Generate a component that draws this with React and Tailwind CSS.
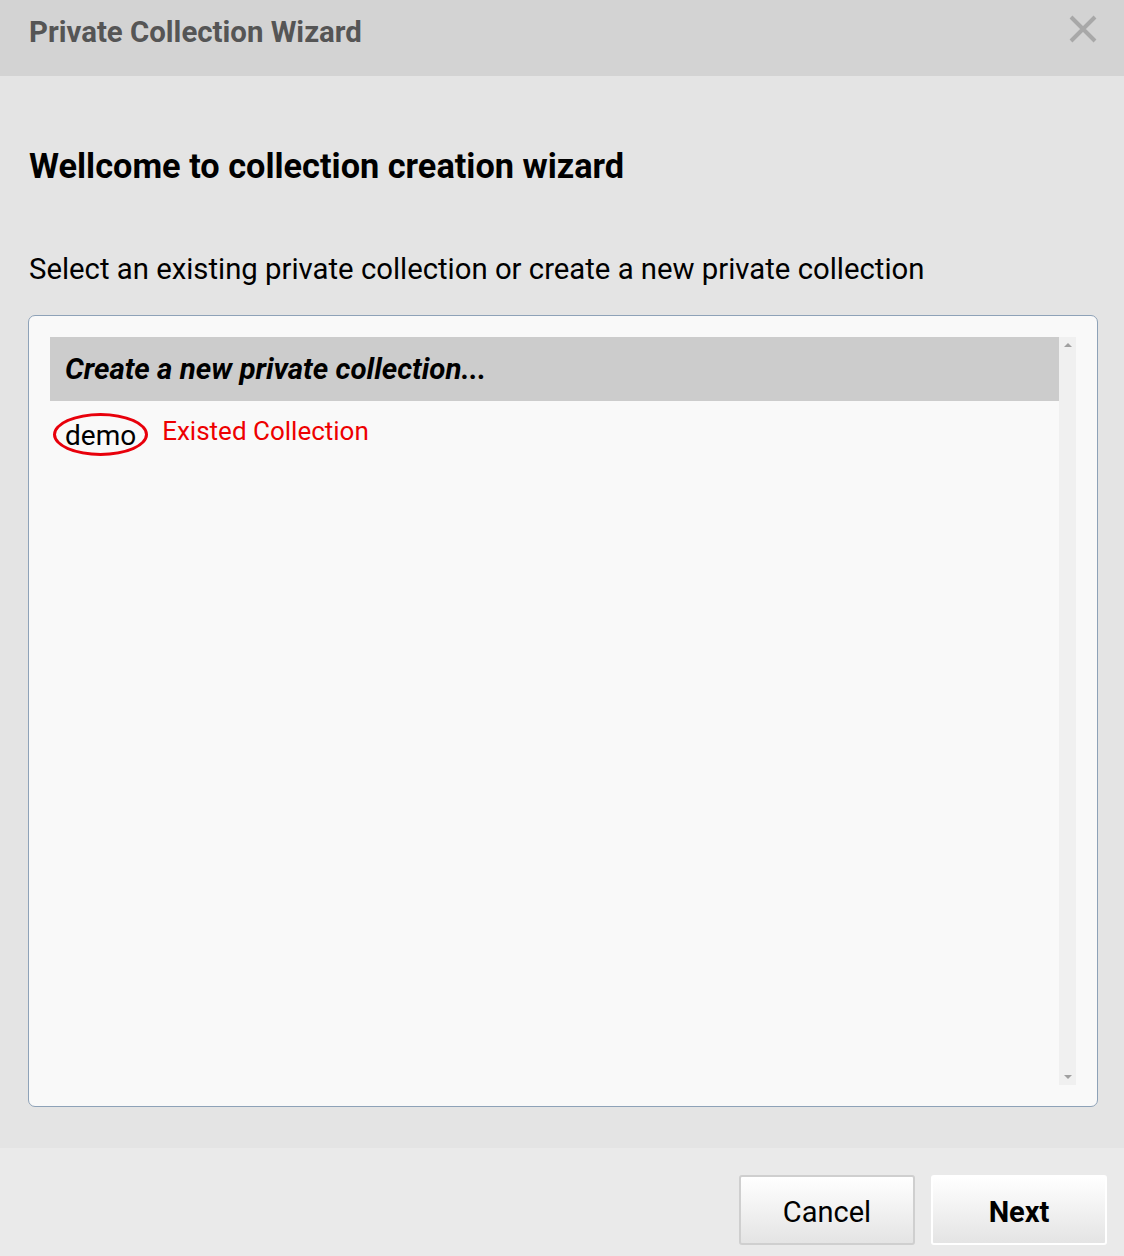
import React from "react";

export default function App() {
  return (
    <div
      className="flex h-[1256px] w-[1124px] flex-col bg-[#e4e4e4] text-black"
      style={{ fontFamily: "Roboto, 'Liberation Sans', sans-serif" }}
    >
      {/* Header */}
      <header className="flex h-[76px] shrink-0 items-center justify-between bg-[#d3d3d3] pl-[29px] pr-[26px]">
        <h1 className="pb-[12px] text-[29.4px] font-bold text-[#555555]">Private Collection Wizard</h1>
        <svg width="30" height="30" viewBox="0 0 30 30" className="mb-[18px]">
          <path d="M3 3 L27 27 M27 3 L3 27" stroke="#a8a8a8" strokeWidth="4" strokeLinecap="butt" />
        </svg>
      </header>

      {/* Body */}
      <section className="flex flex-1 flex-col pl-[28px] pr-[26px]">
        <h2 className="mt-[70px] pl-[1px] text-[34.3px] leading-[40px] font-bold">
          Wellcome to collection creation wizard
        </h2>
        <p className="mt-[65px] pl-[1px] text-[29.3px] leading-[36px]">
          Select an existing private collection or create a new private collection
        </p>

        <div className="mt-[28px] mb-[41px] flex h-[792px] rounded-[7px] border border-[#8ea2b8] bg-[#f9f9f9] p-[21px]">
          <div className="flex-1">
            <div className="flex h-[64px] items-center bg-[#cccccc] pl-[15px] text-[29.5px] font-bold italic">
              Create a new private collection...
            </div>
            <div className="flex items-center pt-[11px] pl-[3px]">
              <span className="rounded-[50%] border-[3px] border-[#e8000b] px-[9px] pt-[2px] text-[28px] leading-[35px]">
                demo
              </span>
              <span className="ml-[14px] pb-[6px] text-[26px] text-[#ee0000]">Existed Collection</span>
            </div>
          </div>
          <div className="flex w-[17px] flex-col items-center justify-between bg-[#f0f0f0] py-[6px]">
            <div className="h-0 w-0 border-x-[4px] border-b-[4px] border-x-transparent border-b-[#a0a0a0]" />
            <div className="h-0 w-0 border-x-[4px] border-t-[4px] border-x-transparent border-t-[#a0a0a0]" />
          </div>
        </div>
      </section>

      {/* Footer */}
      <footer className="flex h-[108px] shrink-0 items-start justify-end gap-[16px] bg-[#eaeaea] pt-[27px] pr-[17px]">
        <button className="h-[70px] w-[176px] rounded-[3px] border-2 border-[#cfcfcf] bg-gradient-to-b from-white to-[#e4e4e4] pt-[5px] text-[29px] text-black">
          Cancel
        </button>
        <button className="h-[70px] w-[176px] rounded-[3px] border-2 border-white bg-gradient-to-b from-white to-[#e4e4e4] pt-[5px] text-[29px] font-bold text-black">
          Next
        </button>
      </footer>
    </div>
  );
}
